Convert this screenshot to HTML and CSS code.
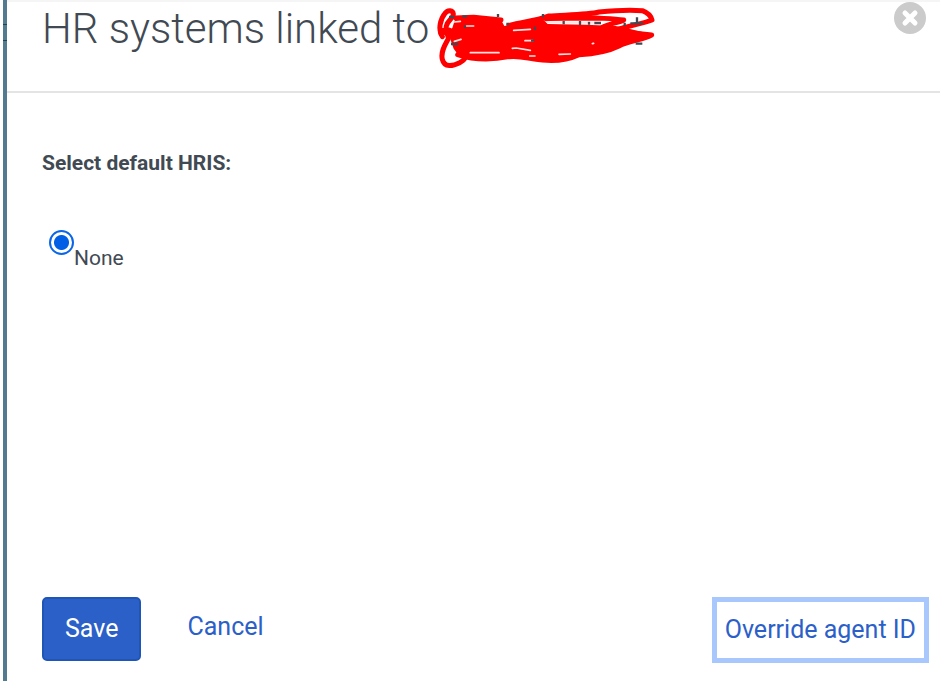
FILE: index.html
```html
<!DOCTYPE html>
<html lang="en">
<head>
    <meta charset="UTF-8">
    <meta name="viewport" content="width=device-width, initial-scale=1.0">
    <title>HR systems</title>
    <link rel="stylesheet" href="styles.css">
</head>
<body>
    <form class="dialog">
        <header class="dialog-header">
            <h1>HR systems linked to</h1>
            <svg class="redacted" viewBox="24 0 657 225" role="img" aria-label="Hidden name">
                <path class="ink-fill" d="M34 94L70 78L80 46L120 40L160 44L214 50L226 72L300 58L340 50L356 66L470 68L560 72L600 80L650 92L668 98L664 108L600 122L560 138L520 154L450 164L400 174L330 176L275 164L170 172L92 164L74 140L62 106Z"/>
                <g class="ink">
                    <path d="M40 104C26 84 34 50 48 34C56 22 72 24 73 36C74 48 56 54 52 72C48 92 58 96 58 110C50 126 34 148 40 172C46 198 72 192 92 182C108 174 114 164 104 156"/>
                    <path d="M34 86L60 84M80 48L134 46L216 54L120 72L70 90"/>
                    <path d="M240 70C290 58 320 56 358 42C430 38 480 38 510 30C570 24 610 24 640 26C656 32 666 42 669 54C640 66 600 70 560 84"/>
                    <path d="M350 50C400 48 450 48 500 48C540 50 560 50 584 54C570 62 540 64 520 76"/>
                    <path d="M560 88L640 96L668 99C650 112 600 116 570 132C530 152 490 156 450 158C420 172 380 178 340 174C300 172 280 160 240 164C190 174 140 176 86 158"/>
                </g>
                <path class="ink-gap" d="M356 61H400M410 62H448M458 62H476M484 62H500M76 60L94 58M112 72L134 72M76 118L96 112M254 85L304 82M288 116L312 116M124 152L210 152M250 139L262 138L304 145M390 157L424 156M302 162L318 162M490 125L494 124"/>
                <g class="name-marks">
                    <path d="M60 45h16M100 43h14M207 36v9M232 66h8M342 36v10M108 70v8M318 74v10M316 116h-10M404 57v10M453 57v12M480 59v9M496 63h20M587 62v10M624 46v20M604 64h38M620 125h20M66 126h22"/>
                </g>
            </svg>
            <button type="button" class="close" aria-label="Close">
                <svg viewBox="0 0 32 32" aria-hidden="true">
                    <circle cx="16" cy="16" r="16" fill="#cbcbcb"/>
                    <path d="M11 11L21 21M21 11L11 21" stroke="#fff" stroke-width="5" stroke-linecap="round"/>
                </svg>
            </button>
        </header>

        <fieldset class="dialog-body">
            <legend>Select default HRIS:</legend>
            <div class="option">
                <input type="radio" id="hrisNone" name="hris" value="none" checked>
                <label for="hrisNone">None</label>
            </div>
        </fieldset>

        <footer class="dialog-footer">
            <button type="button" class="save">Save</button>
            <a href="#" class="cancel">Cancel</a>
            <button type="button" class="override">Override agent ID</button>
        </footer>
    </form>
</body>
</html>
```
FILE: styles.css
```css
* {
    box-sizing: border-box;
}

body {
    margin: 0;
    font-family: Roboto, "Liberation Sans", sans-serif;
    font-size: 21px;
    line-height: 28px;
    color: #414953;
    background: #fff;
}

.dialog {
    display: flex;
    flex-direction: column;
    min-height: 100vh;
    margin-left: 3px;
    padding-left: 4px;
    /* side bar with two dark notches near the top */
    background:
        linear-gradient(#1f4355, #1f4355) 0 24px / 4px 1px no-repeat,
        linear-gradient(#1f4355, #1f4355) 0 40px / 4px 1px no-repeat,
        linear-gradient(#537b8f, #537b8f) 0 0 / 4px 100% no-repeat;
}

.dialog-header {
    display: flex;
    align-items: flex-start;
    padding: 0 14px 14px 35px;
    border-top: 2px solid #f5f5f5;
    border-bottom: 2px solid #e4e4e4;
}

h1 {
    margin: 0;
    font-size: 42px;
    line-height: 54px;
    font-weight: 300;
    white-space: nowrap;
}

.redacted {
    width: 219px;
    height: 75px;
    margin-left: 8px;
}

.name-marks {
    stroke: #414953;
    stroke-width: 7;
    fill: none;
}

.ink {
    stroke: #f00;
    stroke-width: 15;
    stroke-linecap: round;
    stroke-linejoin: round;
    fill: none;
}

.ink-fill {
    fill: #f00;
}

.ink-gap {
    stroke: #fbe3e3;
    stroke-width: 5;
    stroke-linecap: round;
    fill: none;
}

button {
    font: inherit;
    cursor: pointer;
}

.close {
    width: 32px;
    height: 32px;
    margin-left: auto;
    padding: 0;
    border: none;
    background: none;
}

.close svg {
    display: block;
}

.dialog-body {
    flex: 1;
    margin: 0;
    padding: 56px 35px 0;
    border: none;
}

legend {
    float: left;
    width: 100%;
    padding: 0;
    font-weight: bold;
}

.option {
    display: flex;
    align-items: flex-start;
    clear: both;
    padding: 53px 0 0 7px;
}

.option input {
    appearance: none;
    width: 25px;
    height: 25px;
    margin: 0;
    border: 2px solid #0a66e8;
    border-radius: 50%;
    background: radial-gradient(circle, #005fe5 7px, #fff 8px);
}

.option label {
    padding-top: 14px;
}

.dialog-footer {
    display: flex;
    align-items: flex-start;
    padding: 0 11px 18px 35px;
    font-size: 25px;
    line-height: 32px;
}

.save {
    padding: 14px 21px;
    border: 2px solid #1f55b5;
    border-radius: 5px;
    background: #2b60c9;
    color: #fff;
}

.cancel {
    margin-left: 46px;
    padding-top: 14px;
    color: #2b60c9;
    text-decoration: none;
}

.override {
    margin-left: auto;
    padding: 12px 8px;
    border: 5px solid #a7c7fd;
    background: #fff;
    color: #2b60c9;
}
```
